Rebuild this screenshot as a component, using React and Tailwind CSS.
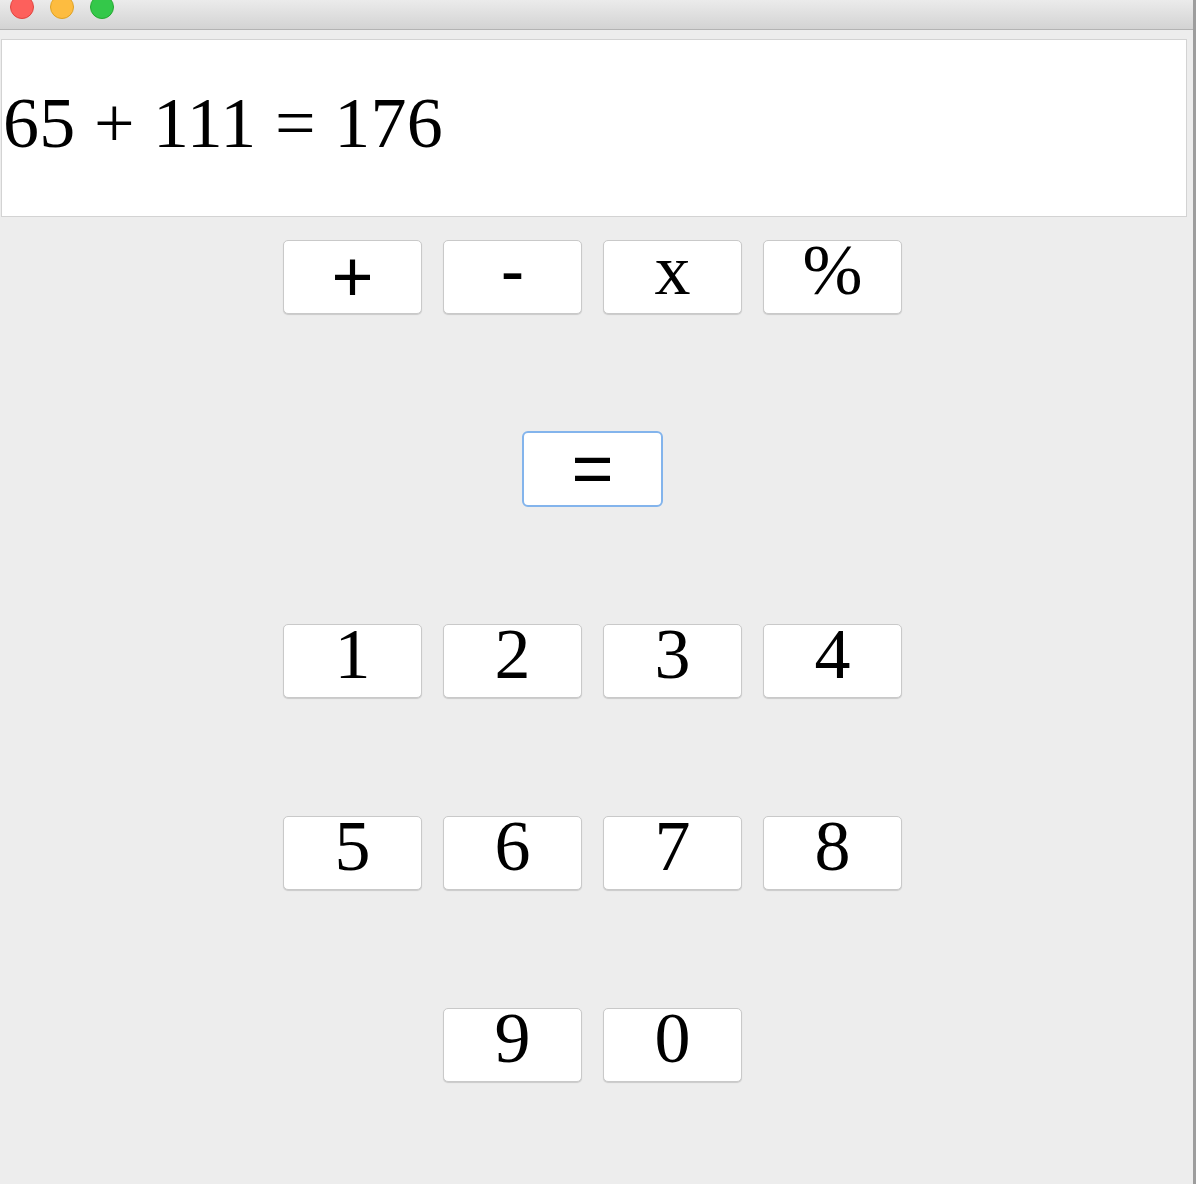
import React from "react";

const serif = { fontFamily: '"Liberation Serif", "Times New Roman", serif' };
const sans = { fontFamily: '"Liberation Sans", Arial, sans-serif' };

function Key({ label, focused, isSans, pt }) {
  const style = isSans ? sans : undefined;
  if (focused) {
    return (
      <div className="w-[141px] h-[76px] shrink-0 bg-white border-2 border-[#83b4ec] rounded-[6px] flex justify-center items-start text-black text-[72px] leading-[58px]">
        <span style={style} className={pt}>{label}</span>
      </div>
    );
  }
  return (
    <div className="w-[139px] h-[74px] shrink-0 bg-white border border-[#c9c9c9] rounded-[5px] shadow-[0_1px_1px_rgba(0,0,0,0.15)] flex justify-center items-start text-black text-[72px] leading-[58px]">
      <span style={style} className={pt}>{label}</span>
    </div>
  );
}

function Row({ keys, focused }) {
  return (
    <div className="h-[74px] flex items-center justify-center gap-[21px]">
      {keys.map((k) => {
        const label = typeof k === "string" ? k : k.label;
        return (
          <Key
            key={label}
            label={label}
            focused={focused}
            isSans={typeof k !== "string" && k.sans}
            pt={typeof k !== "string" ? k.pt : undefined}
          />
        );
      })}
    </div>
  );
}

export default function App() {
  return (
    <div className="w-[1196px] h-[1184px] flex bg-[#ededed] overflow-hidden" style={serif}>
      <div className="w-[1193px] flex flex-col">
        <div className="h-[30px] shrink-0 border-b border-[#b3b3b3] bg-gradient-to-b from-[#ebebeb] to-[#d3d3d3] flex items-end pb-[10px] pl-[10px] gap-[16px] overflow-hidden">
          <div className="w-[24px] h-[24px] shrink-0 rounded-full bg-[#fd605c] border border-[#e0443e]" />
          <div className="w-[24px] h-[24px] shrink-0 rounded-full bg-[#fdbc40] border border-[#dea123]" />
          <div className="w-[24px] h-[24px] shrink-0 rounded-full bg-[#34c84a] border border-[#24a830]" />
        </div>
        <div className="pt-[9px] pl-[1px]">
          <div className="w-[1186px] h-[178px] bg-white border border-[#d3d3d3] pt-[47px] pl-[1px] text-[72px] leading-[72px] text-black whitespace-pre tracking-[0.3px]">
            65 + 111 = 176
          </div>
        </div>
        <div className="w-[1185px] flex flex-col pt-[23px] gap-[118px]">
          <Row
            keys={[
              { label: "+", sans: true, pt: "pt-[6px]" },
              { label: "-", sans: true },
              "x",
              "%",
            ]}
          />
          <Row keys={[{ label: "=", sans: true, pt: "pt-[6px]" }]} focused />
          <Row keys={["1", "2", "3", "4"]} />
          <Row keys={["5", "6", "7", "8"]} />
          <Row keys={["9", "0"]} />
        </div>
      </div>
      <div className="w-[3px] bg-[#9d9d9d]" />
    </div>
  );
}
